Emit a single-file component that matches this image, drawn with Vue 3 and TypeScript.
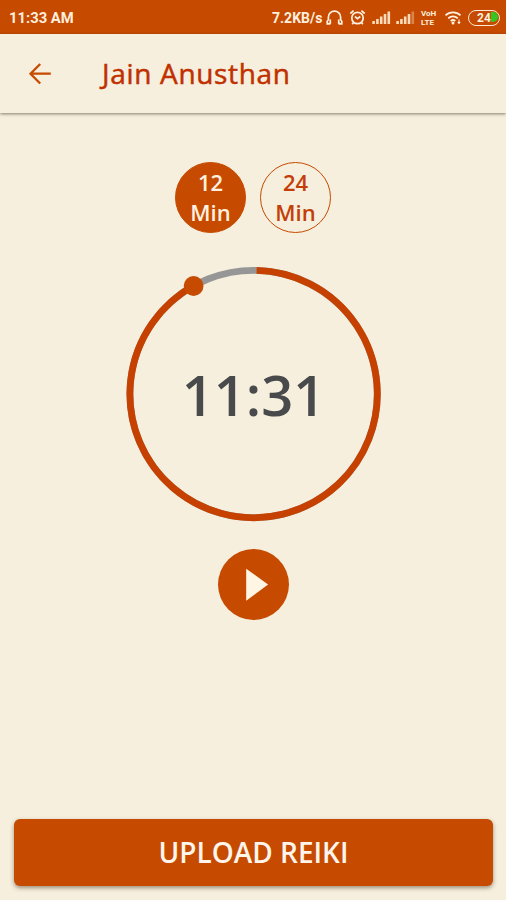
<script setup lang="ts">
import { computed, ref } from 'vue'

interface Duration {
  minutes: number
}

const durations: Duration[] = [{ minutes: 12 }, { minutes: 24 }]
const selected = ref(12)
const remaining = ref(691)

const clock = computed(() => {
  const m = Math.floor(remaining.value / 60)
  const s = remaining.value % 60
  return `${m}:${String(s).padStart(2, '0')}`
})

const bars = [3, 5, 7.5, 10, 12.5]
</script>

<template>
  <div class="screen">
    <div class="status">
      <span class="time">11:33 AM</span>
      <span class="speed">7.2KB/s</span>
      <svg class="headset" width="17" height="16" viewBox="0 0 17 16">
        <path d="M3.6 12.6V13.8H1.2V11.2L2.4 9.8V7a6.1 5.8 0 0 1 12.2 0v2.8l1.2 1.4v2.6h-2.4v-1.2M4.3 9.5v4.3M12.7 9.5v4.3" />
      </svg>
      <svg class="alarm" width="17" height="17" viewBox="0 0 17 17">
        <circle cx="8.5" cy="9" r="5.7" />
        <path d="M1.3 4.5 4.6 1.6M15.7 4.5 12.4 1.6M5.9 7.5l2.6 2.2 2.8-2.2M4.7 13.2l-1.5 2M12.3 13.2l1.5 2" />
      </svg>
      <svg class="signal first" width="19" height="13" viewBox="0 0 19 13">
        <rect v-for="(h, i) in bars" :key="i" :x="0.3 + i * 3.8" :y="13 - h" width="2.6" :height="h" />
      </svg>
      <svg class="signal second" width="19" height="13" viewBox="0 0 19 13">
        <rect v-for="(h, i) in bars" :key="i" :x="0.3 + i * 3.8" :y="13 - h" width="2.6" :height="h" :class="{ faint: i === 4 }" />
      </svg>
      <span class="volte"><span>VoH</span><span>LTE</span></span>
      <svg class="wifi" width="19" height="15" viewBox="0 0 19 15">
        <path d="M1.5 5.4a11 11 0 0 1 15 0M4.2 8.3a7 7 0 0 1 9.6 0M6.7 11a3.5 3.5 0 0 1 4.6 0" />
        <circle cx="9" cy="13" r="1.5" />
        <path class="link" d="M15 9.5v4M13.8 12.2l1.2 1.3 1.2-1.3" />
      </svg>
      <span class="battery"><span class="level"></span><span class="charge">24</span></span>
    </div>

    <header class="bar">
      <button class="back" aria-label="Back">
        <svg width="24" height="24" viewBox="0 0 24 24"><path d="M22.8 11.7H2.6M12.2 2 2.5 11.7l9.7 9.8" /></svg>
      </button>
      <h1>Jain Anusthan</h1>
    </header>

    <main class="content">
      <div class="durations">
        <button
          v-for="d in durations"
          :key="d.minutes"
          class="duration"
          :class="{ active: selected === d.minutes }"
          @click="selected = d.minutes"
        >
          <span>{{ d.minutes }}</span><span>Min</span>
        </button>
      </div>

      <div class="timer">
        <svg width="261" height="260" viewBox="0 0 261 260">
          <circle class="track" cx="130.6" cy="130" r="123.7" />
          <path class="progress" d="M133.6 6.35A123.7 123.7 0 1 1 70.7 21.8" />
          <circle class="knob" cx="70.6" cy="22" r="9.9" />
        </svg>
        <span class="clock">{{ clock }}</span>
      </div>

      <button class="play" aria-label="Play">
        <svg width="71" height="71" viewBox="0 0 71 71"><path d="M28.2 19.7 50.1 35.6 28.2 51.7Z" /></svg>
      </button>

      <button class="upload">UPLOAD REIKI</button>
    </main>
  </div>
</template>

<style>
body {
  margin: 0;
  background: #f6efde;
}
</style>

<style scoped>
.screen {
  width: 506px;
  height: 900px;
  display: flex;
  flex-direction: column;
  overflow: hidden;
  background: #f6efde;
  font-family: "Open Sans", "Noto Sans", sans-serif;
}
button {
  border: 0;
  padding: 0;
  background: none;
  font-family: inherit;
  cursor: pointer;
}
svg {
  display: block;
  flex: none;
}
.status {
  box-sizing: border-box;
  height: 34px;
  flex: none;
  display: flex;
  align-items: center;
  padding: 1px 6px 0 9px;
  background: #c64a00;
  color: #fff0df;
  font-family: Roboto, sans-serif;
  font-weight: 700;
  font-size: 14.3px;
  white-space: nowrap;
}
.time {
  width: 263px;
  flex: none;
  font-size: 14.8px;
}
.speed {
  width: 54px;
  flex: none;
  font-size: 14px;
}
.headset,
.alarm,
.wifi {
  fill: none;
  stroke: #fff0df;
  stroke-width: 1.7;
}
.alarm {
  margin-left: 6px;
}
.signal {
  fill: #fbdcb9;
}
.first {
  margin-left: 6px;
}
.second {
  margin-left: 5px;
}
.faint {
  opacity: 0.4;
}
.volte {
  width: 17px;
  margin-left: 6px;
  flex: none;
  display: flex;
  flex-direction: column;
  font-size: 8px;
  line-height: 9px;
}
.wifi {
  margin-left: 6px;
}
.wifi circle {
  fill: #fff0df;
  stroke: none;
}
.wifi .link {
  stroke-width: 1.1;
}
.battery {
  position: relative;
  box-sizing: border-box;
  width: 32px;
  height: 16px;
  margin-left: 5px;
  flex: none;
  display: flex;
  align-items: center;
  justify-content: center;
  border: 1.5px solid #ffe9d5;
  border-radius: 8px;
  font-size: 12px;
  line-height: 12px;
}
.level {
  position: absolute;
  right: 1px;
  top: 1.5px;
  width: 7px;
  height: 10px;
  border-radius: 0 5px 5px 0;
  background: #35c71f;
}
.charge {
  position: relative;
}
.bar {
  box-sizing: border-box;
  height: 79px;
  flex: none;
  display: flex;
  align-items: center;
  padding-left: 28px;
  box-shadow: 0 1px 3px rgba(60, 50, 30, 0.6);
}
.back {
  width: 24px;
  height: 24px;
  margin-right: 50px;
}
.back path {
  fill: none;
  stroke: #c64a00;
  stroke-width: 2.3;
}
h1 {
  margin: 0 0 1px;
  color: #c03000;
  font-size: 28px;
  font-weight: 400;
  letter-spacing: 0.68px;
  -webkit-text-stroke: 0.5px #c03000;
  white-space: nowrap;
}
.content {
  flex: 1;
  display: flex;
  flex-direction: column;
  align-items: center;
  padding: 49px 13px 14px 14px;
}
.durations {
  display: flex;
  gap: 14px;
  margin-right: 1px;
}
.duration {
  box-sizing: border-box;
  width: 71px;
  height: 71px;
  display: flex;
  flex-direction: column;
  align-items: center;
  justify-content: center;
  padding-bottom: 2px;
  border: 1.5px solid #c64a00;
  border-radius: 50%;
  color: #c43e08;
  font-size: 22px;
  font-weight: 600;
  line-height: 30px;
}
.duration.active {
  background: #c64a00;
  color: #fff0df;
}
.timer {
  width: 261px;
  height: 260px;
  margin-top: 31px;
  display: grid;
  place-items: center;
}
.timer > * {
  grid-area: 1 / 1;
}
.track,
.progress {
  fill: none;
  stroke-width: 6.8;
}
.track {
  stroke: #969696;
}
.progress {
  stroke: #c64000;
}
.knob {
  fill: #c64a00;
}
.clock {
  color: #484a4b;
  font-size: 56px;
  font-weight: 600;
  line-height: 60px;
}
.play {
  width: 71px;
  height: 71px;
  margin-top: 24.5px;
  border-radius: 50%;
  background: #c64a00;
}
.play path {
  fill: #fff5e5;
}
.upload {
  width: 479px;
  height: 67px;
  margin-top: auto;
  padding-bottom: 1px;
  border-radius: 6px;
  background: #c64a00;
  box-shadow: 0 2px 4px rgba(70, 50, 20, 0.5);
  color: #fff5ea;
  font-size: 28px;
  font-weight: 600;
}
</style>
